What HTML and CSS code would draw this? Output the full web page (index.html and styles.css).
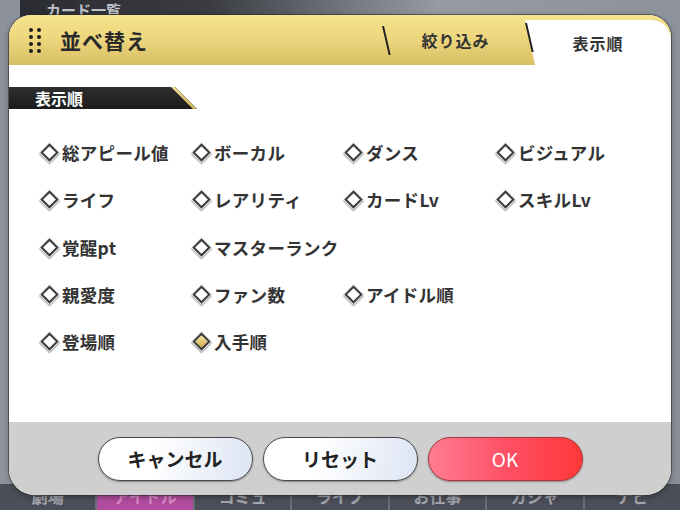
FILE: index.html
```html
<!DOCTYPE html>
<html lang="ja">
<head>
    <meta charset="UTF-8">
    <meta name="viewport" content="width=device-width, initial-scale=1.0">
    <title>並べ替え</title>
    <link rel="stylesheet" href="styles.css">
</head>
<body>
    <div class="screen">
        <div class="page-head"><span>カード一覧</span></div>
        <div class="page-nav">
            <div class="nav-item">劇場</div>
            <div class="nav-item current">アイドル</div>
            <div class="nav-item">コミュ</div>
            <div class="nav-item">ライブ</div>
            <div class="nav-item">お仕事</div>
            <div class="nav-item">ガシャ</div>
            <div class="nav-item">ナビ</div>
        </div>

        <div class="modal">
            <div class="modal-head">
                <div class="grip">
                    <span></span><span></span><span></span><span></span>
                    <span></span><span></span><span></span><span></span>
                </div>
                <h1 class="title">並べ替え</h1>
                <div class="tabs">
                    <div class="tab">絞り込み</div>
                    <div class="tab active">表示順</div>
                </div>
            </div>

            <div class="modal-body">
                <div class="section-label">表示順</div>
                <div class="options">
                    <div class="option"><i class="mark"></i>総アピール値</div>
                    <div class="option"><i class="mark"></i>ボーカル</div>
                    <div class="option"><i class="mark"></i>ダンス</div>
                    <div class="option"><i class="mark"></i>ビジュアル</div>
                    <div class="option"><i class="mark"></i>ライフ</div>
                    <div class="option"><i class="mark"></i>レアリティ</div>
                    <div class="option"><i class="mark"></i>カードLv</div>
                    <div class="option"><i class="mark"></i>スキルLv</div>
                    <div class="option"><i class="mark"></i>覚醒pt</div>
                    <div class="option row-end"><i class="mark"></i>マスターランク</div>
                    <div class="option row-start"><i class="mark"></i>親愛度</div>
                    <div class="option"><i class="mark"></i>ファン数</div>
                    <div class="option"><i class="mark"></i>アイドル順</div>
                    <div class="option row-start"><i class="mark"></i>登場順</div>
                    <div class="option selected"><i class="mark"></i>入手順</div>
                </div>
            </div>

            <div class="modal-foot">
                <button class="btn">キャンセル</button>
                <button class="btn">リセット</button>
                <button class="btn ok">OK</button>
            </div>
        </div>
    </div>
</body>
</html>
```

FILE: styles.css
```css
body {
    margin: 0;
    font-family: "Noto Sans CJK JP", "Noto Sans", sans-serif;
}
.screen {
    position: relative;
    width: 680px;
    height: 510px;
    overflow: hidden;
    display: flex;
    flex-direction: column;
    justify-content: space-between;
    background: linear-gradient(100deg, #8d9199 0%, #9a9ea6 45%, #8a8f98 100%);
}

/* page under the dialog */
.page-head {
    margin-left: 20px;
    width: 420px;
    height: 30px;
    border-radius: 0 0 0 16px;
    background: linear-gradient(90deg, #2b2c31 0%, #3a3c42 45%, rgba(90, 94, 102, 0) 100%);
}
.page-head span {
    display: block;
    margin: 1px 0 0 26px;
    color: #bfc1c6;
    font-size: 15px;
    font-weight: bold;
    line-height: 18px;
}
.page-nav {
    display: flex;
    height: 26px;
    background: #4c4f59;
}
.nav-item {
    flex: 1;
    text-align: center;
    color: #a3a6ad;
    font-size: 16px;
    font-weight: bold;
    border-right: 2px solid #6b6e77;
}
.nav-item:last-child {
    border-right: none;
}
.nav-item.current {
    background: #b24c9e;
    color: #d98ac8;
}

/* dialog */
.modal {
    position: absolute;
    left: 9px;
    top: 15px;
    width: 662px;
    height: 480px;
    border-radius: 22px 22px 26px 26px;
    overflow: hidden;
    display: flex;
    flex-direction: column;
    background: #fff;
    box-shadow: 0 0 0 1px rgba(40, 40, 50, 0.55), 0 2px 6px rgba(0, 0, 0, 0.35);
}
.modal-head {
    height: 50px;
    display: flex;
    align-items: center;
    background: linear-gradient(180deg, #f7e48e 0%, #ecd57c 50%, #d8bf66 100%);
}
.grip {
    display: grid;
    grid-template-columns: repeat(2, 4px);
    gap: 3px 4px;
    margin-left: 20px;
}
.grip span {
    width: 4px;
    height: 4px;
    border-radius: 50%;
    background: #1e1e1e;
}
.title {
    margin: 0 0 0 19px;
    font-size: 21px;
    font-weight: bold;
    color: #2a2a2a;
    letter-spacing: 1px;
}
.tabs {
    margin-left: auto;
    align-self: stretch;
    display: flex;
}
.tab {
    position: relative;
    z-index: 0;
    width: 139px;
    display: flex;
    align-items: center;
    justify-content: center;
    padding-left: 4px;
    font-size: 16px;
    font-weight: bold;
    letter-spacing: 1px;
    color: #333;
}
.tab::before {
    content: "";
    position: absolute;
    left: 0;
    top: 11px;
    width: 2px;
    height: 29px;
    background: #222;
    transform: skewX(13deg);
    transform-origin: top left;
}
.tab.active {
    width: 146px;
    padding-top: 6px;
    padding-left: 0;
    border-top-right-radius: 20px;
}
.tab.active::after {
    content: "";
    position: absolute;
    z-index: -1;
    left: 0;
    top: 5px;
    right: 0;
    bottom: 0;
    background: #fff;
    border-top-right-radius: 20px;
    clip-path: polygon(0 0, 100% 0, 100% 100%, 10px 100%);
}
.tab.active::before {
    top: 8px;
}

.modal-body {
    flex: 1;
    padding-top: 22px;
}
.section-label {
    position: relative;
    width: 192px;
    height: 22px;
    padding-left: 26px;
    box-sizing: border-box;
    color: #fff;
    font-size: 16px;
    font-weight: bold;
    line-height: 22px;
    background: linear-gradient(180deg, #2e2e2e, #1c1c1c);
    clip-path: polygon(0 0, 166px 0, 188px 22px, 0 22px);
}
.section-label::after {
    content: "";
    position: absolute;
    top: 0;
    right: 0;
    width: 30px;
    height: 22px;
    background: linear-gradient(135deg, #f2df8a, #c9ab4e);
    clip-path: polygon(0 0, 4px 0, 26px 22px, 22px 22px);
}
.options {
    display: grid;
    grid-template-columns: repeat(4, 152px);
    grid-auto-rows: 47.3px;
    padding: 20px 0 0 31px;
}
.option {
    display: flex;
    align-items: center;
    font-size: 17.5px;
    font-weight: bold;
    letter-spacing: 0.3px;
    color: #333;
    white-space: nowrap;
}
.option.row-end {
    grid-column: 2 / 3;
}
.option.row-start {
    grid-column: 1 / 2;
}
.mark {
    flex: none;
    width: 9px;
    height: 9px;
    margin: 0 6px 0 3px;
    border: 2px solid #3c3c3c;
    background: #fff;
    transform: rotate(45deg);
    box-shadow: 0 0 0 1px #e4e4e4, 1px 1px 1px 1px #a9a9a9;
}
.selected .mark {
    background: linear-gradient(135deg, #f8e7a6, #d3a846);
}

.modal-foot {
    height: 73px;
    display: flex;
    align-items: center;
    justify-content: center;
    gap: 10px;
    background: #cfcfcf;
}
.btn {
    width: 155px;
    height: 44px;
    border: 1.5px solid #4a4a4a;
    border-radius: 22px;
    font-family: inherit;
    font-size: 19px;
    font-weight: bold;
    color: #222;
    background: linear-gradient(100deg, #ffffff 35%, #dce4f3 100%);
    box-shadow: 0 1px 2px rgba(0, 0, 0, 0.35);
    cursor: pointer;
}
.btn.ok {
    color: #fff;
    font-weight: normal;
    border-color: #a8353c;
    background: linear-gradient(90deg, #ff7d92 0%, #ff5066 50%, #ff3838 100%);
}
```
